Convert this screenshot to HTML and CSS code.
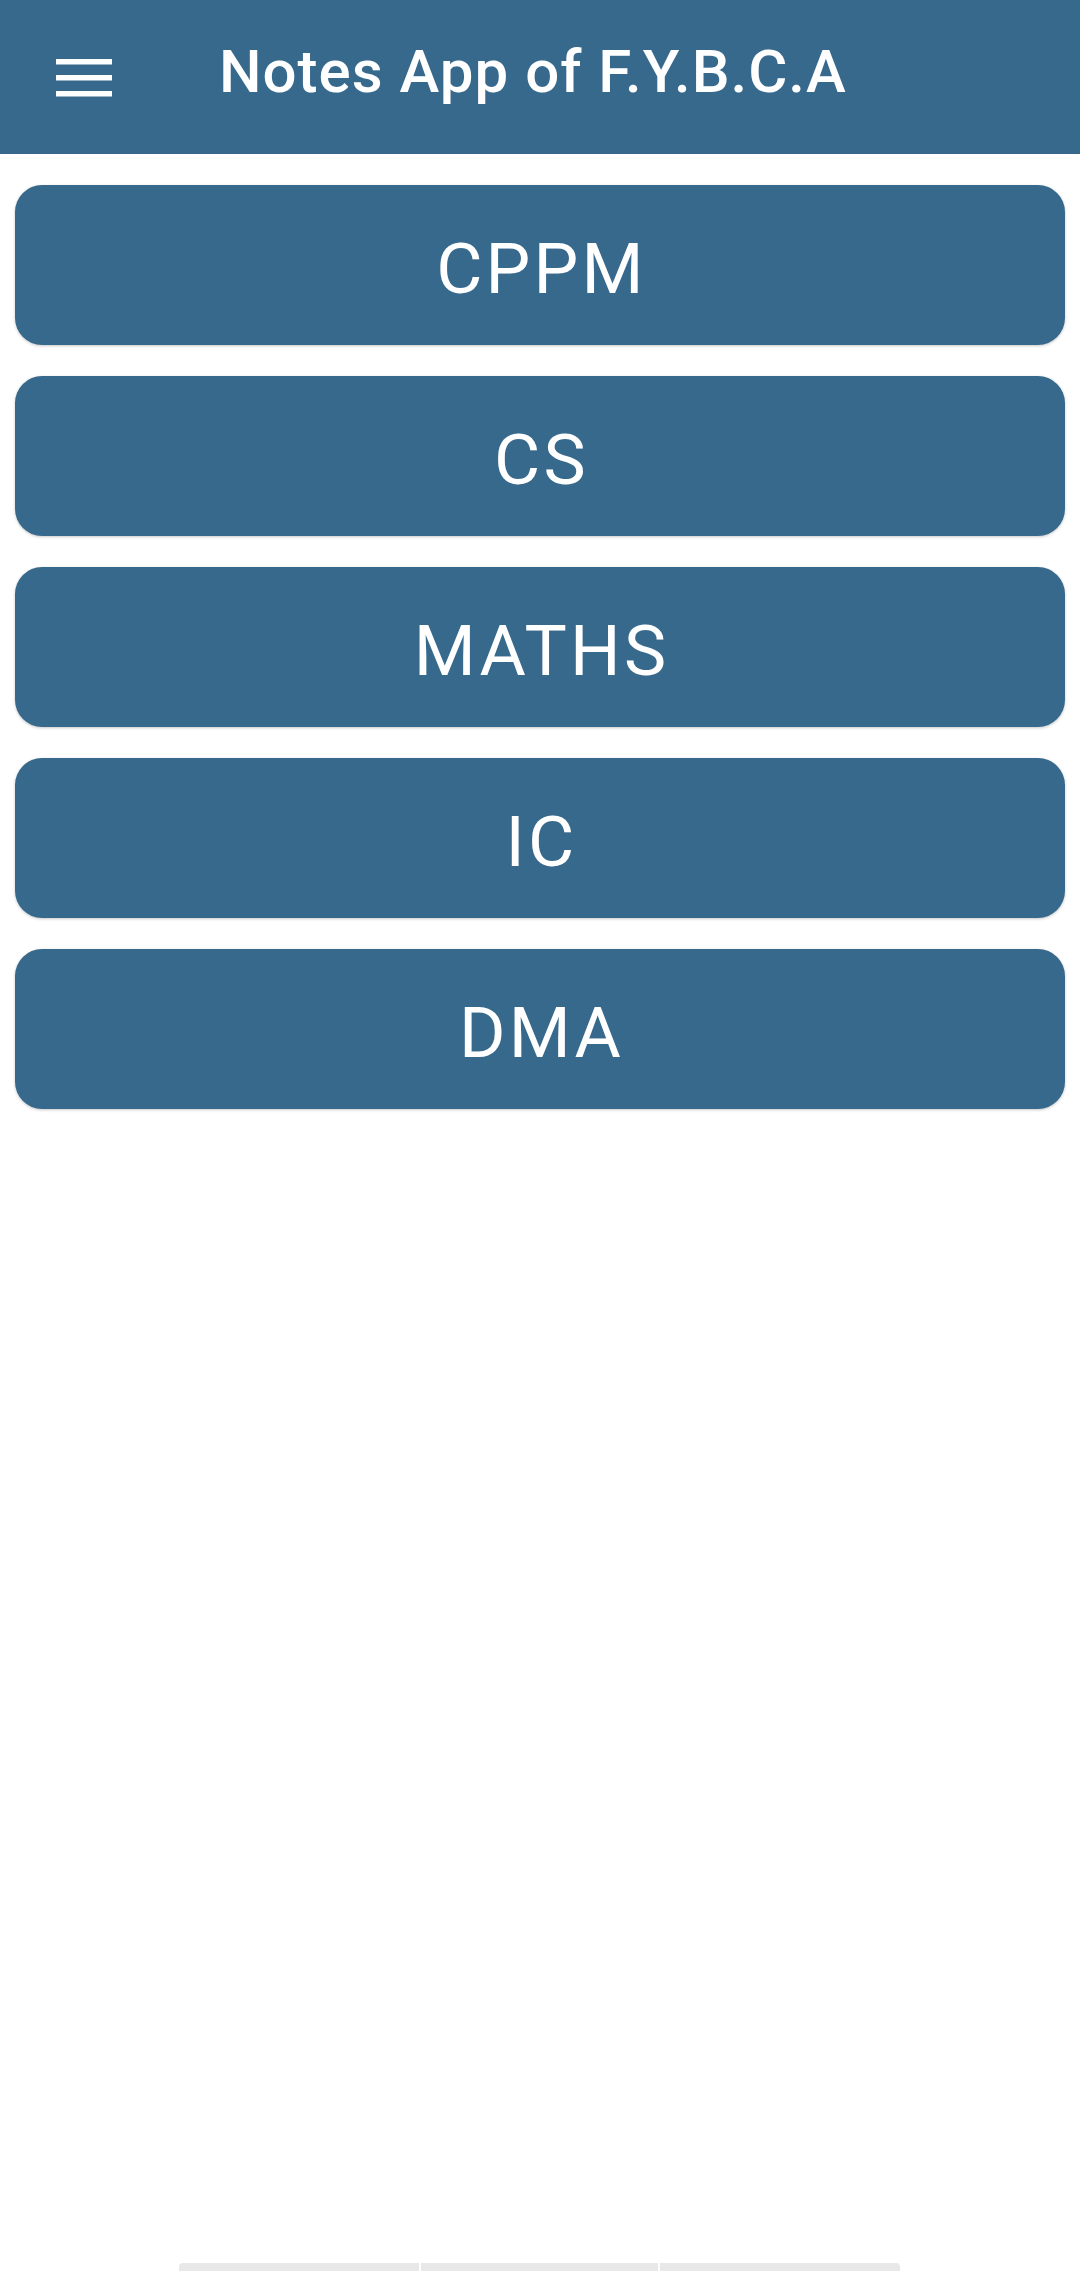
FILE: index.html
```html
<!DOCTYPE html>
<html>
<head>
<meta charset="utf-8">
<link rel="stylesheet" href="styles.css">
</head>
<body>
<div class="page">
  <header class="toolbar">
    <svg class="menu" width="56" height="38" viewBox="0 0 56 38">
      <rect x="0" y="0" width="56" height="5.5" fill="#fff"/>
      <rect x="0" y="16" width="56" height="5.5" fill="#fff"/>
      <rect x="0" y="32" width="56" height="5.5" fill="#fff"/>
    </svg>
    <h1 class="title">Notes App of F.Y.B.C.A</h1>
  </header>
  <main class="list">
    <div class="subject">CPPM</div>
    <div class="subject">CS</div>
    <div class="subject">MATHS</div>
    <div class="subject">IC</div>
    <div class="subject">DMA</div>
  </main>
  <footer class="tabs">
    <div class="tab tab-first"></div>
    <div class="tab tab-mid"></div>
    <div class="tab tab-last"></div>
  </footer>
</div>
</body>
</html>
```
FILE: styles.css
```css
html, body {
  margin: 0;
  padding: 0;
  background: #ffffff;
}
.page {
  min-height: 2271px;
  display: flex;
  flex-direction: column;
  font-family: Roboto, "Noto Sans", sans-serif;
}
.toolbar {
  height: 154px;
  background: #37698d;
  display: flex;
  align-items: center;
  box-sizing: border-box;
}
.menu {
  margin-left: 56px;
  margin-top: 1px;
  flex: none;
}
.title {
  margin: 0 0 0 107px;
  padding-bottom: 11px;
  color: #ffffff;
  font-size: 60px;
  font-weight: 500;
  letter-spacing: 1px;
}
.list {
  display: flex;
  flex-direction: column;
  gap: 31px;
  padding: 31px 15px 0 15px;
}
.subject {
  height: 160px;
  box-sizing: border-box;
  background: #37698d;
  border-radius: 27px;
  box-shadow: 0 1px 3px rgba(0, 0, 0, 0.22);
  color: #ffffff;
  font-size: 71px;
  letter-spacing: 3.2px;
  display: flex;
  align-items: center;
  justify-content: center;
  padding-top: 7px;
  padding-left: 3px;
}
.tabs {
  margin-top: auto;
  display: flex;
  gap: 2px;
  padding-left: 179px;
  height: 8px;
}
.tab {
  height: 8px;
  background: #e8e8e8;
}
.tab-first { width: 240px; border-top-left-radius: 4px; }
.tab-mid { width: 237px; }
.tab-last { width: 240px; border-top-right-radius: 4px; }
```
